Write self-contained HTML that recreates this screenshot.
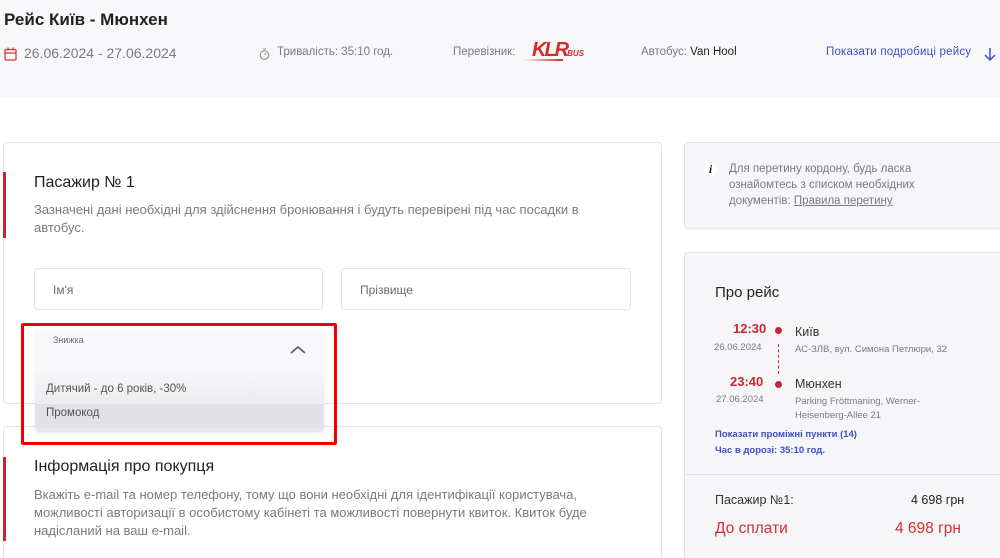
<!DOCTYPE html>
<html><head><meta charset="utf-8"><style>
*{margin:0;padding:0;box-sizing:border-box}
html,body{width:1000px;height:558px;overflow:hidden}
body{background:#fff;font-family:"Liberation Sans","Noto Sans CJK SC",sans-serif;color:#222;position:relative}
.a{position:absolute;white-space:nowrap}
.hdr{position:absolute;left:0;top:0;width:1000px;height:97px;background:#f8f8fa}
.card{position:absolute;border:1px solid #e3e3e8;border-radius:4px;background:#fff}
.bar{position:absolute;left:3px;width:3px;background:#c8272d}
.g{color:#7a7a80}
.inp{position:absolute;border:1px solid #e3e3e8;border-radius:4px;background:#fff;font-size:12px;color:#6a6a72;padding:14px 18px}
</style></head><body>
<div class="hdr"></div>
<div class="a" style="left:4px;top:10px;font-size:17px;font-weight:bold;color:#222">Рейс Київ - Мюнхен</div>
<svg class="a" style="left:4px;top:47px" width="13" height="14" viewBox="0 0 13 14"><rect x="1" y="2.5" width="11" height="10.5" rx="1" fill="none" stroke="#d23a3a" stroke-width="1.3"/><line x1="1" y1="6" x2="12" y2="6" stroke="#d23a3a" stroke-width="1.3"/><line x1="4" y1="0.5" x2="4" y2="3.5" stroke="#d23a3a" stroke-width="1.3"/><line x1="9" y1="0.5" x2="9" y2="3.5" stroke="#d23a3a" stroke-width="1.3"/></svg>
<div class="a g" style="left:24px;top:45px;font-size:14px">26.06.2024 - 27.06.2024</div>
<svg class="a" style="left:259px;top:48px" width="11" height="12" viewBox="0 0 11 12"><circle cx="5.5" cy="7" r="4.3" fill="none" stroke="#888" stroke-width="1"/><line x1="4" y1="1" x2="7" y2="1" stroke="#888"/><line x1="5.5" y1="7" x2="7" y2="5" stroke="#888"/></svg>
<div class="a g" style="left:277px;top:46px;font-size:11.5px">Тривалість: 35:10 год.</div>
<div class="a g" style="left:453px;top:46px;font-size:11.5px">Перевізник:</div>
<div class="a" style="left:532px;top:39px;font-size:20px;font-weight:bold;font-style:italic;color:#d42a2a;letter-spacing:-2px">KLR<span style="font-size:8px;letter-spacing:0">BUS</span></div>
<div class="a" style="left:523px;top:59px;width:40px;height:2px;background:linear-gradient(90deg,transparent,#d42a2a)"></div>
<div class="a" style="left:641px;top:46px;font-size:11.5px"><span class="g">Автобус:</span> <span style="color:#222">Van Hool</span></div>
<div class="a" style="left:826px;top:46px;font-size:11.5px;color:#3a4fc8;letter-spacing:0.2px">Показати подробиці рейсу</div>
<svg class="a" style="left:983px;top:47px" width="14" height="15" viewBox="0 0 14 15"><path d="M7 1V13M2 8L7 13L12 8" fill="none" stroke="#3a4fc8" stroke-width="1.5"/></svg>

<div class="card" style="left:3px;top:142px;width:659px;height:262px"></div>
<div class="bar" style="top:172px;height:66px"></div>
<div class="a" style="left:34px;top:174px;font-size:16px;color:#222">Пасажир № 1</div>
<div class="a g" style="left:34px;top:201px;font-size:13px;line-height:18px">Зазначені дані необхідні для здійснення бронювання і будуть перевірені під час посадки в<br>автобус.</div>
<div class="inp" style="left:34px;top:268px;width:289px;height:42px">Ім'я</div>
<div class="inp" style="left:341px;top:268px;width:290px;height:42px">Прізвище</div>

<div class="card" style="left:3px;top:426px;width:659px;height:140px;border-bottom:none"></div>
<div class="bar" style="top:457px;height:84px"></div>
<div class="a" style="left:34px;top:458px;font-size:16px;color:#222">Інформація про покупця</div>
<div class="a g" style="left:34px;top:486px;font-size:13px;line-height:18px">Вкажіть e-mail та номер телефону, тому що вони необхідні для ідентифікації користувача,<br>можливості авторизації в особистому кабінеті та можливості повернути квиток. Квиток буде<br>надісланий на ваш e-mail.</div>

<div class="a" style="left:35px;top:329px;width:289px;height:103px;border-radius:4px;overflow:hidden;background:#f8f8fa;box-shadow:0 1px 3px rgba(0,0,0,.08)">
<div class="a" style="left:18px;top:6px;font-size:9px;color:#6a6a80">Знижка</div>
<svg class="a" style="left:255px;top:16px" width="16" height="10" viewBox="0 0 16 10"><path d="M1 8L8 2L15 8" fill="none" stroke="#555a6a" stroke-width="1.6"/></svg>
<div class="a" style="left:0;top:43px;width:289px;height:32px;background:linear-gradient(#f6f6f8,#ececf0)"></div>
<div class="a" style="left:11px;top:54px;font-size:11.5px;color:#555">Дитячий - до 6 років, -30%</div>
<div class="a" style="left:0;top:75px;width:289px;height:24px;background:#e1e1e6"></div>
<div class="a" style="left:0;top:99px;width:289px;height:4px;background:#e8e8ec"></div>
<div class="a" style="left:11px;top:78px;font-size:11.5px;color:#555">Промокод</div>
</div>
<div class="a" style="left:21px;top:323px;width:316px;height:122px;border:3px solid #f20000;border-radius:2px"></div>

<div class="card" style="left:684px;top:142px;width:330px;height:87px;background:#f6f6f8"></div>
<div class="a" style="left:704px;top:163px;width:13px;height:13px;border-radius:50%;background:#fff;font:italic bold 12px 'Liberation Serif',serif;text-align:center;line-height:13px">i</div>
<div class="a g" style="left:729px;top:161px;font-size:11.5px;line-height:16px">Для перетину кордону, будь ласка<br>ознайомтесь з списком необхідних<br>документів: <span style="text-decoration:underline">Правила перетину</span></div>

<div class="card" style="left:684px;top:252px;width:330px;height:320px;background:#f6f6f8;border-bottom:none"></div>
<div class="a" style="left:684px;top:474px;width:316px;height:1px;background:#e3e3e8"></div>
<div class="a" style="left:715px;top:284px;font-size:15px;color:#222">Про рейс</div>
<div class="a" style="left:733px;top:321px;font-size:13px;font-weight:bold;color:#c8272d">12:30</div>
<div class="a g" style="left:714px;top:342px;font-size:9.5px">26.06.2024</div>
<div class="a" style="left:775px;top:327px;width:7px;height:7px;border-radius:50%;background:#c8272d"></div>
<div class="a" style="left:778px;top:344px;height:30px;border-left:1px dashed #c8272d"></div>
<div class="a" style="left:795px;top:325px;font-size:12.5px;color:#333">Київ</div>
<div class="a g" style="left:795px;top:344px;font-size:9.5px">АС-ЗЛВ, вул. Симона Петлюри, 32</div>
<div class="a" style="left:730px;top:374px;font-size:13px;font-weight:bold;color:#c8272d">23:40</div>
<div class="a g" style="left:716px;top:394px;font-size:9.5px">27.06.2024</div>
<div class="a" style="left:775px;top:381px;width:7px;height:7px;border-radius:50%;background:#c8272d"></div>
<div class="a" style="left:795px;top:377px;font-size:12.5px;color:#333">Мюнхен</div>
<div class="a g" style="left:795px;top:395px;font-size:9.5px;line-height:14px">Parking Fröttmaning, Werner-<br>Heisenberg-Allee 21</div>
<div class="a" style="left:715px;top:429px;font-size:9.5px;font-weight:bold;color:#3a4fc8">Показати проміжні пункти (14)</div>
<div class="a" style="left:715px;top:445px;font-size:9.5px;font-weight:bold;color:#3a4fc8">Час в дорозі: 35:10 год.</div>
<div class="a" style="left:715px;top:493px;font-size:12.5px;color:#333">Пасажир №1:</div>
<div class="a" style="left:911px;top:493px;font-size:12.5px;color:#222">4 698 грн</div>
<div class="a" style="left:715px;top:520px;font-size:15.5px;color:#d32f2f">До сплати</div>
<div class="a" style="left:895px;top:520px;font-size:15.5px;color:#d32f2f">4 698 грн</div>
</body></html>
